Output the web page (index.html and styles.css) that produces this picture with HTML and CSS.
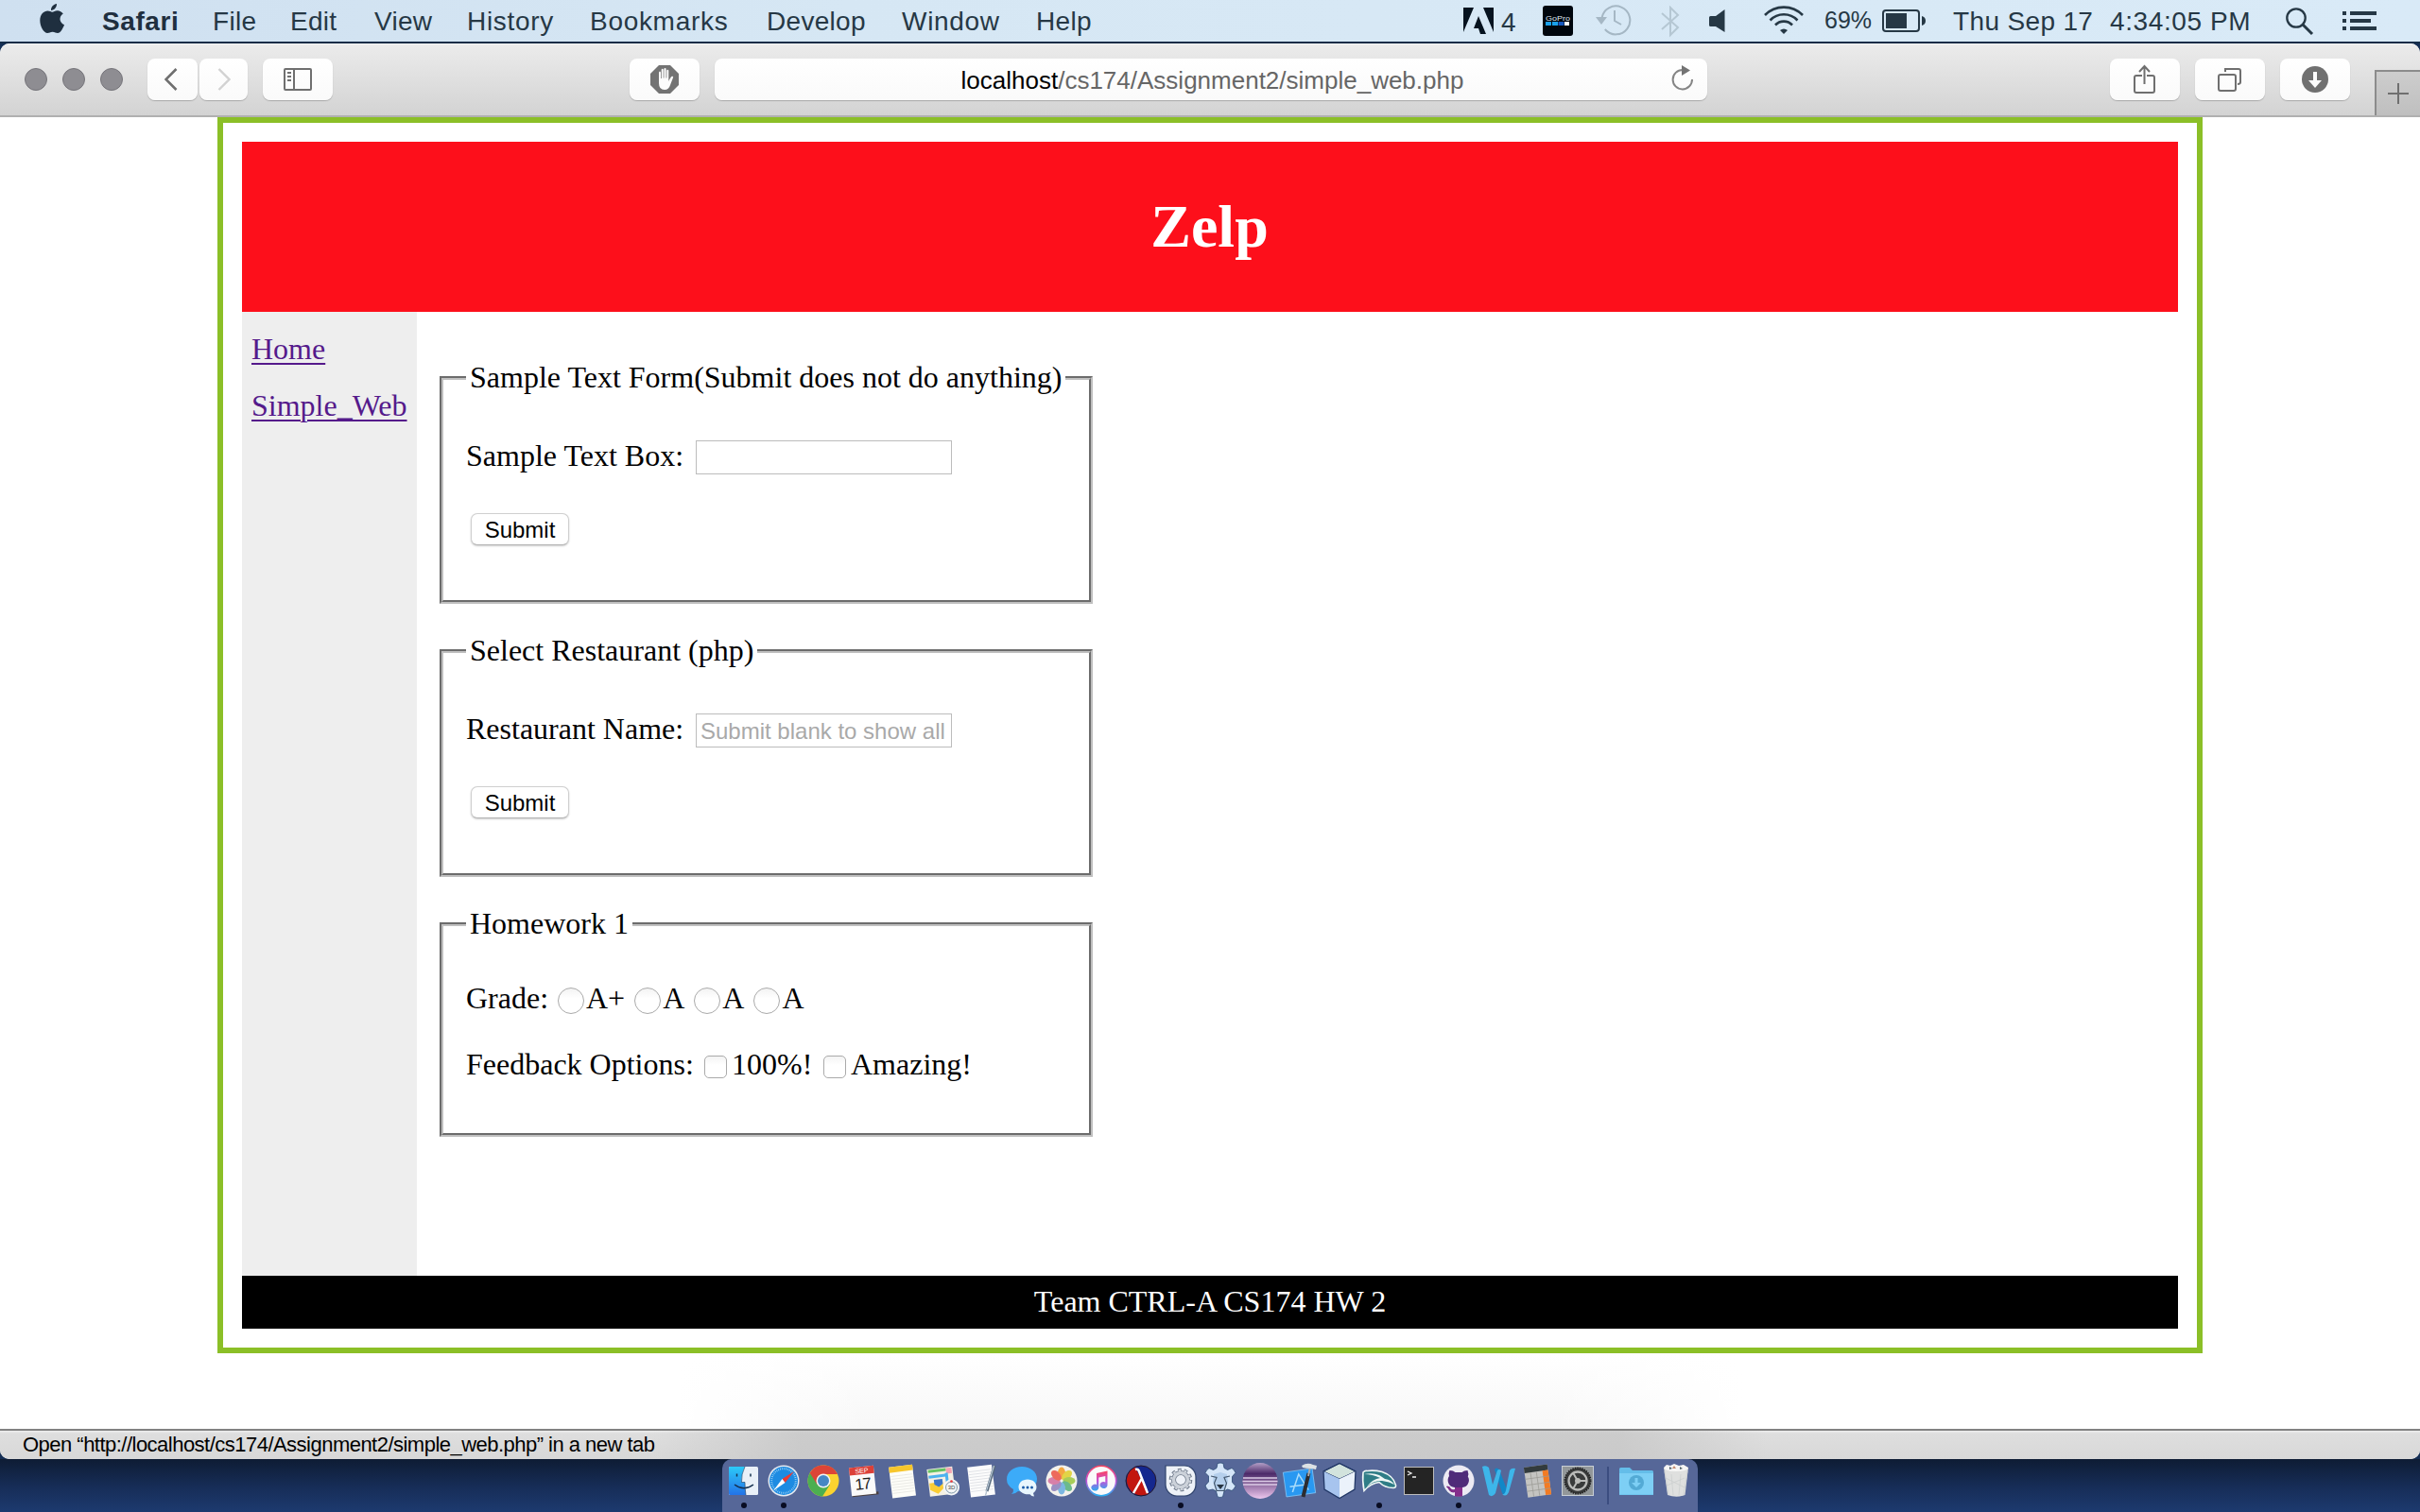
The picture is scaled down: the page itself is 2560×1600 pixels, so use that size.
FILE: index.html
```html
<!DOCTYPE html>
<html lang="en">
<head>
<meta charset="utf-8">
<title>Zelp</title>
<link rel="stylesheet" href="styles.css">
</head>
<body>
<header class="menubar">
  <svg class="apple" width="26" height="32" viewBox="0 0 26 32"><path fill="#1f2f3f" d="M18 0c.3 3.700-2.700 7-6 6.900C11.700 3.500 14.800.4 18 0zM13.300 8.700c1.500 0 3-1.500 5.600-1.400 2.200.1 4.500 1.200 5.900 3.300-4.900 3.200-4.200 9.500 1.200 11.600-1.300 3.500-3.900 8.800-7 8.800-2 0-2.900-1.300-5.400-1.300S10.200 31 8.200 31C4.400 31 .3 24 .3 17.800.3 11 4.600 7.500 8.400 7.500c2.200 0 3.600 1.200 4.900 1.200z"/></svg>
  <nav class="menus">
    <b style="width:117px">Safari</b><span style="width:82px">File</span><span style="width:89px">Edit</span><span style="width:98px">View</span><span class="loose" style="width:130px">History</span><span class="loose" style="width:187px">Bookmarks</span><span style="width:143px">Develop</span><span class="loose" style="width:142px">Window</span><span>Help</span>
  </nav>
  <div class="status-items">
    <svg class="adobe" width="32" height="28" viewBox="0 0 32 28"><path fill="#06131f" d="M0 0h11L0 26zM21 0h11v26zM16 9l8 19h-6l-2-6h-5z"/></svg>
    <span class="adobe-n">4</span>
    <svg class="gopro" width="32" height="32" viewBox="0 0 32 32"><rect width="32" height="32" rx="3" fill="#00060d"/><text x="3" y="16" font-size="7" textLength="26" lengthAdjust="spacingAndGlyphs" fill="#dfe7ee" font-family="Liberation Sans">GoPro</text><path fill="#19a0ea" d="M3 17h6v4H3zM10 17h6v4h-6z"/><path fill="#1557bd" d="M16.500 17h6v4h-6z"/><path fill="#fff" d="M23 17h5v4h-5z"/></svg>
    <svg class="tm" width="38" height="34" viewBox="0 0 38 34"><g fill="none" stroke="#a5b7c4" stroke-width="2"><path d="M6.500 15a15 15 0 1 1 3.300 12"/><path d="M20 7v11l7 4"/></g><path fill="#a5b7c4" d="M0 14h12l-6 8z"/></svg>
    <svg class="bt" width="20" height="34" viewBox="0 0 20 34"><path fill="none" stroke="#b5c7d3" stroke-width="2" d="M1 8l17 15-8 8V2l8 8L1 25"/></svg>
    <svg class="vol" width="18" height="26" viewBox="0 0 18 26"><path fill="#263845" d="M1.500 7H7l9.500-7v24L7 18H1.500Q0 18 0 16.500v-8Q0 7 1.500 7z"/></svg>
    <svg class="wifi" width="42" height="30" viewBox="0 0 42 30"><g fill="none" stroke="#263845" stroke-width="2.600"><path d="M1 10a28 28 0 0 1 40 0M6.500 15.500a20 20 0 0 1 29 0M12 20.500a12.500 12.500 0 0 1 18 0"/></g><path fill="#263845" d="M17 26q4-3 8 0l-4 4z"/></svg>
    <span class="pct">69%</span>
    <svg class="bat" width="46" height="24" viewBox="0 0 46 24"><rect x="1" y="1" width="38" height="22" rx="3" fill="none" stroke="#263845" stroke-width="2"/><path fill="#263845" d="M4 4h22v16H4zM42 7q4 1 4 5t-4 5z"/></svg>
    <span class="date">Thu Sep 17</span><span class="clock">4:34:05 PM</span>
    <svg class="find" width="30" height="30" viewBox="0 0 30 30"><g fill="none" stroke="#263845"><circle cx="11" cy="11" r="9.700" stroke-width="2.300"/><path d="M18 18l10 10" stroke-width="3"/></g></svg>
    <svg class="list" width="36" height="20" viewBox="0 0 36 20"><path fill="#263845" d="M0 0h4v4H0zM8 0h28v4H8zM0 8h4v4H0zM8 8h22v4H8zM0 16h4v4H0zM8 16h28v4H8z"/></svg>
  </div>
</header>

<main class="window">
  <div class="toolbar">
    <div class="lights"><i></i><i></i><i></i></div>
    <div class="btn back"><svg width="14" height="24" viewBox="0 0 14 24"><path fill="none" stroke="#6f6f6f" stroke-width="2.600" d="M12.500 1L1.500 12l11 11"/></svg></div>
    <div class="btn fwd"><svg width="14" height="24" viewBox="0 0 14 24"><path fill="none" stroke="#d2d2d2" stroke-width="2.400" d="M1.500 1l11 11-11 11"/></svg></div>
    <div class="btn side"><svg width="30" height="24" viewBox="0 0 30 24"><path fill="none" stroke="#6f6f6f" stroke-width="2" d="M2 1h26q1 0 1 1v20q0 1-1 1H2q-1 0-1-1V2q0-1 1-1zM11 1v22M4 5h4M4 9h4M4 13h4"/></svg></div>
    <div class="btn block"><svg width="30" height="30" viewBox="0 0 30 30"><path fill="#737373" d="M9 0h12l9 9v12l-9 9H9l-9-9V9z"/><path fill="#fcfcfc" d="M9 8q0-1.500 1-1.500T11 8v6h.7V5q0-1.300 1-1.300t1 1.300v8.500h.700V4.200q0-1.300 1.100-1.300t1.100 1.300v9.300h.7V6q0-1.300 1-1.300t1 1.300v11q2-4.500 3.500-5.200 1.700-.3 1.300 1.200L21 21q-1.500 5-6 5-6 0-6-7z"/></svg></div>
    <div class="address"><span class="host">localhost</span><span class="path">/cs174/Assignment2/simple_web.php</span>
      <svg class="reload" width="24" height="28" viewBox="0 0 24 28"><path fill="none" stroke="#858585" stroke-width="2" d="M12 5A10.200 10.200 0 1 0 22 15"/><path fill="#737373" d="M11 0l9 5.500-9 5.500z"/></svg></div>
    <div class="btn share"><svg width="24" height="32" viewBox="0 0 24 32"><path fill="none" stroke="#6f6f6f" stroke-width="2" d="M9 12H3q-2 0-2 2v14q0 2 2 2h17q2 0 2-2V14q0-2-2-2h-6M11.500 21V2M6 8l5.500-6L17 8"/></svg></div>
    <div class="btn tabs"><svg width="26" height="26" viewBox="0 0 26 26"><path fill="none" stroke="#6f6f6f" stroke-width="2" d="M3 8h14q2 0 2 2v13q0 2-2 2H3q-2 0-2-2V10q0-2 2-2zM8 5V2h14q2 0 2 2v12q0 2-3 2"/></svg></div>
    <div class="btn down"><svg width="28" height="28" viewBox="0 0 28 28"><circle cx="14" cy="14" r="14" fill="#707070"/><path fill="#fcfcfc" d="M12 6h4v9h5l-7 8-7-8h5z"/></svg></div>
    <div class="newtab"><svg width="22" height="22" viewBox="0 0 22 22"><path stroke="#6f6f6f" stroke-width="2" d="M0 11h22M11 0v22"/></svg></div>
  </div>

  <div class="viewport">
    <div class="page">
      <h1 class="banner">Zelp</h1>
      <div class="columns">
        <nav class="sidebar"><a href="#">Home</a><a href="#">Simple_Web</a></nav>
        <section class="content">
          <fieldset class="box">
            <legend>Sample Text Form(Submit does not do anything)</legend>
            <div class="field"><label>Sample Text Box:</label><input class="text" type="text"></div>
            <button class="submit" type="button">Submit</button>
          </fieldset>
          <fieldset class="box">
            <legend>Select Restaurant (php)</legend>
            <div class="field"><label>Restaurant Name:</label><input class="text" type="text" placeholder="Submit blank to show all"></div>
            <button class="submit" type="button">Submit</button>
          </fieldset>
          <fieldset class="box short">
            <legend>Homework 1</legend>
            <div class="options"><span class="lead grade">Grade:</span><input class="radio" type="radio"><span class="opt">A+</span><input class="radio" type="radio"><span class="opt">A</span><input class="radio" type="radio"><span class="opt">A</span><input class="radio" type="radio"><span class="opt">A</span></div>
            <div class="options feedback"><span class="lead fb">Feedback Options:</span><input class="check" type="checkbox"><span class="opt hundred">100%!</span><input class="check" type="checkbox"><span class="opt">Amazing!</span></div>
          </fieldset>
        </section>
      </div>
      <footer class="footer">Team CTRL-A CS174 HW 2</footer>
    </div>
  </div>
  <div class="statusbar">Open “http://localhost/cs174/Assignment2/simple_web.php” in a new tab</div>
</main>

<div class="desktop">
  <div class="dock">
    <div class="app on"><svg viewBox="0 0 42 40"><rect x="5" y="5" width="31" height="30" rx="1.500" fill="#e9f0f8"/><path fill="url(#fb)" d="M6.500 5H22q-4 8-3.500 16.500H22q0 7 1 13.500H6.500Q5 35 5 33.500v-27Q5 5 6.500 5z"/><path fill="none" stroke="#14304f" stroke-width="1.500" d="M13.500 12.500v3M28 12.500v3M11 24q10 7.500 20 0"/><path fill="none" stroke="#1b3b5c" stroke-width=".6" d="M22 5q-4 8-3.500 16.500H22q0 7 1 13.500"/><defs><linearGradient id="fb" x2="0" y2="1"><stop stop-color="#2ccaf8"/><stop offset="1" stop-color="#2373e8"/></linearGradient></defs></svg></div>
    <div class="app on"><svg viewBox="0 0 42 40"><circle cx="21" cy="20" r="16.500" fill="#e6eaf0"/><circle cx="21" cy="20" r="15" fill="#1d8be2"/><circle cx="21" cy="20" r="12.800" fill="none" stroke="#9bd0f3" stroke-width="2" stroke-dasharray=".8 1.200"/><path fill="#f0392f" d="M32 10L19.500 18l3 4z"/><path fill="#fff" d="M10 30.500L19.500 18l3 4z"/></svg></div>
    <div class="app"><svg viewBox="0 0 42 40"><circle cx="21" cy="20" r="16.500" fill="#fbd32f"/><path fill="#4caf50" d="M21 20L6.700 11.700A16.500 16.500 0 0 0 20 36.500l8-12.500z"/><path fill="#dc4437" d="M6.700 11.700A16.500 16.500 0 0 1 36 13H21l-6.500 11z"/><circle cx="21" cy="20" r="7.500" fill="#f4f4f4"/><circle cx="21" cy="20" r="6" fill="#4587c4"/></svg></div>
    <div class="app"><svg viewBox="0 0 42 40"><g transform="rotate(-6 21 20)"><path fill="#4c4140" d="M8 33h28v3H8z"/><rect x="7.500" y="5" width="26" height="30" fill="#fafafa"/><path fill="#dc4038" d="M7.500 5h26v8h-26z"/><text x="20.500" y="11.600" font-size="7" text-anchor="middle" fill="#fff" font-family="Liberation Sans">SEP</text><text x="20" y="29" font-size="17" text-anchor="middle" fill="#222" font-family="Liberation Sans" letter-spacing="-1.500">17</text></g></svg></div>
    <div class="app"><svg viewBox="0 0 42 40"><g transform="rotate(-7 21 20)"><rect x="8" y="4" width="25" height="33" fill="#fdfdf8"/><path fill="#f7c62c" d="M8 4h25v6H8z"/><path stroke="#dfdfda" stroke-width=".6" d="M9 14h23M9 17h23M9 20h23M9 23h23M9 26h23M9 29h23M9 32h23"/></g></svg></div>
    <div class="app"><svg viewBox="0 0 42 40"><g transform="rotate(-7 21 20)"><rect x="6" y="6" width="27" height="29" fill="#f5f1e4"/><path fill="#66c463" d="M7 7h19v3H7z"/><path fill="#f5a2b2" d="M26 7h6v6h-6z"/><path fill="#4db2ef" d="M7 13h20v3H7z"/><path fill="none" stroke="#4db2ef" stroke-width="3" d="M26 12v12"/><path fill="#f9cc33" d="M7 21h14v7l-6 5-8-5z"/><path fill="#3e76c7" d="M12 18h9v5l-4.500 3-4.500-3z"/></g><circle cx="30.500" cy="27" r="8.500" fill="#f3f5f6"/><circle cx="30.500" cy="27" r="6" fill="none" stroke="#8098a8"/><text x="30.500" y="29.200" font-size="6" text-anchor="middle" fill="#444" font-family="Liberation Sans">3D</text><circle cx="30.500" cy="20.500" r="1.300" fill="#e33"/></svg></div>
    <div class="app"><svg viewBox="0 0 42 40"><g transform="rotate(-7 21 20)"><rect x="7" y="4" width="26" height="32" fill="#fcfcfc"/><path stroke="#d0d4da" stroke-width=".6" d="M8 9h24M8 12h24M8 15h24M8 18h24M8 21h24M8 24h24M8 27h24M8 30h24"/></g><path stroke="#56697d" stroke-width="3" d="M34 4l-8 27"/><path stroke="#b7c6d4" stroke-width="1.200" d="M33.500 4l-8 27-1 5"/></svg></div>
    <div class="app"><svg viewBox="0 0 42 40"><path fill="#3cabf8" d="M21 5c9 0 16 5.500 16 13s-7 13.500-16 13.500l-4-.4q-3 3-7 3 2.500-2.500 2-5.100Q5 25 5 18.500C5 10.500 12 5 21 5z"/><path fill="#e9f6fd" d="M27 18.500c5.500 0 9.500 3.600 9.500 8 0 3-1.500 5-3.500 6.500l1 3.500q-3 0-4.500-2.300c-6.500.8-12-2.700-12-7.700 0-4.400 4-8 9.500-8z"/><g fill="#1c5ca8"><circle cx="22.500" cy="27" r="1.500"/><circle cx="27" cy="27" r="1.500"/><circle cx="31.500" cy="27" r="1.500"/></g></svg></div>
    <div class="app"><svg viewBox="0 0 42 40"><circle cx="21" cy="20" r="16.500" fill="#f3f1ec"/><g opacity=".85"><ellipse cx="21" cy="12" rx="4" ry="6.500" fill="#f59b23"/><ellipse cx="21" cy="12" rx="4" ry="6.500" fill="#e0cf2a" transform="rotate(45 21 20)"/><ellipse cx="21" cy="12" rx="4" ry="6.500" fill="#9cc740" transform="rotate(90 21 20)"/><ellipse cx="21" cy="12" rx="4" ry="6.500" fill="#54b17d" transform="rotate(135 21 20)"/><ellipse cx="21" cy="12" rx="4" ry="6.500" fill="#68aee0" transform="rotate(180 21 20)"/><ellipse cx="21" cy="12" rx="4" ry="6.500" fill="#8c80bd" transform="rotate(225 21 20)"/><ellipse cx="21" cy="12" rx="4" ry="6.500" fill="#d36d9e" transform="rotate(270 21 20)"/><ellipse cx="21" cy="12" rx="4" ry="6.500" fill="#ec5344" transform="rotate(315 21 20)"/></g></svg></div>
    <div class="app"><svg viewBox="0 0 42 40"><defs><linearGradient id="it" x2="0" y2="1"><stop stop-color="#fb4360"/><stop offset=".5" stop-color="#c552d8"/><stop offset="1" stop-color="#28aef2"/></linearGradient></defs><circle cx="21" cy="20" r="15.700" fill="#fafafa" stroke="url(#it)" stroke-width="1.600"/><path fill="url(#it)" d="M16 12l11.500-2.500v15a4 3.500 0 1 1-2.200-3.100V15l-7 1.500v10.500a4 3.500 0 1 1-2.300-3.100z"/></svg></div>
    <div class="app"><svg viewBox="0 0 42 40"><circle cx="21" cy="20" r="16" fill="#14278e"/><path fill="#c2160f" d="M15 5.200A16 16 0 1 0 29 34L17 10z"/><circle cx="21" cy="20" r="16" fill="none" stroke="#25172b"/><path fill="none" stroke="#fff" stroke-width="2.500" d="M15 8q3-1 4 2l9 23M21.500 18L13 33"/></svg></div>
    <div class="app on"><svg viewBox="0 0 42 40"><path fill="#eef2f8" stroke="#31456e" stroke-width="1.200" d="M5 4h20a12 12 0 0 1 12 12v8a12 12 0 0 1-12 12h-8A12 12 0 0 1 5 24z"/><circle cx="21" cy="19" r="10.500" fill="none" stroke="#6c7788" stroke-width="3.500" stroke-dasharray="3.600 3"/><circle cx="21" cy="19" r="7.500" fill="none" stroke="#6c7788" stroke-width="5"/><circle cx="21" cy="19" r="10" fill="none" stroke="#ccd2da" stroke-width="2.500" stroke-dasharray="2.500 3.780" stroke-dashoffset="-.5"/><circle cx="21" cy="19" r="7.500" fill="none" stroke="#ccd2da" stroke-width="3.500"/></svg></div>
    <div class="app"><svg viewBox="0 0 42 40"><g fill="#d4e5f8" stroke="#2b4a73" stroke-width=".8"><path d="M18 1.500q3-1 6 0l1 5q2 1 3.500 2l4.500-2q3 2 4 5l-3.500 4v6l3.500 4q-1 3-4 5l-4.500-1.500-3.500 2-1.500 6q-3 1-5.500 0l-1.500-6-3.500-2L8.500 30q-3-2-3.500-5l3.500-4v-6L5 11.500q1-3 4-5l4.500 2q2-1 3.500-2z"/></g><path fill="#b5cfec" d="M14 13l7-2 7 2 1 8-4 9h-8l-4-9z"/><path fill="none" stroke="#44586f" stroke-width="1.200" d="M11 15l6 1.500-2.500 6 2.500 8h8l2.500-8-2.500-6 6-1.500"/><path fill="#273442" d="M17 24h8l-4 5z"/></svg></div>
    <div class="app"><svg viewBox="0 0 42 40"><defs><linearGradient id="ec" x2="0" y2="1"><stop stop-color="#b39fc7"/><stop offset=".3" stop-color="#4c2a69"/><stop offset="1" stop-color="#edc7ee"/></linearGradient></defs><ellipse cx="21" cy="20" rx="18.500" ry="19" fill="url(#ec)"/><path stroke="#dccbe6" stroke-width="1.600" d="M3 17h36M2.500 20.500h37M3 24h36"/></svg></div>
    <div class="app"><svg viewBox="0 0 42 40"><g transform="rotate(-8 20 22)"><rect x="5" y="9" width="31" height="26" fill="#2998f1" stroke="#8dcdf9" stroke-width=".7"/><path fill="none" stroke="#a9dcfb" stroke-width="1.500" d="M12 31l9-18 8 18M10 25h19"/></g><path stroke="#2c2c30" stroke-width="4" d="M30.500 12l-6 25"/><path stroke="#aaa" stroke-width="2" d="M32 5l-2 10"/><path fill="#dce1e4" d="M23 4q6-4 12-1l4 1-1 4-5-1q-5 0-9-1z"/></svg></div>
    <div class="app"><svg viewBox="0 0 42 40"><path fill="#d2e3dd" stroke="#223867" d="M21 1.500L38 10 21 18 4 10z"/><path fill="#a7c4ee" d="M4 10l17 8v20.500L5 29z"/><path fill="#ebf2fb" d="M38 10l-17 8v20.500L37 29z"/><path fill="none" stroke="#223867" stroke-width="1.300" d="M21 1.500L38 10l-1 19-16 9.500L5 29 4 10z"/></svg></div>
    <div class="app on"><svg viewBox="0 0 42 40"><path fill="#2f7d86" stroke="#eff7f5" stroke-width="1.600" d="M4 11q2-2 4-1.500 8-1 16 1 12 4 14.500 14 .5 3-2.500 3-9 0-15-6-9 1-16 9Q3 20 4 11z"/><path fill="#eff7f5" d="M5 13q9-2 16 1l6 4q7 1 10 6-5-3-13-4-8-1-16 6 6-8 14-9-8-4-17-4z"/></svg></div>
    <div class="app"><svg viewBox="0 0 42 40"><rect x="5.500" y="5.500" width="31" height="29" fill="#242424" stroke="#bcbcbc"/><path fill="none" stroke="#eee" stroke-width="1.300" d="M9 10l4 2-4 2M14 16h4"/></svg></div>
    <div class="app on"><svg viewBox="0 0 42 40"><circle cx="21" cy="20" r="16.500" fill="#eceaf3"/><path fill="#4f2b79" d="M11.500 9q4 0 6 2h7q2-2 6-2 1.500 4 .3 6.500Q33 19 31 23q-1.500 3.500-6 4v9.300q-4 .6-8 0V32q-5 1-7-4l-2-2q3-1 4.500 2 2 2.500 4.500 1v-2q-5-.5-6.500-4-2-4.500.5-8Q10 12 11.500 9z"/><path fill="#842e8b" d="M17 27h8v9.300q-4 .6-8 0V32q-5 1-7-4l-2-2q3-1 4.500 2 2 2.500 4.500 1z"/></svg></div>
    <div class="app"><svg viewBox="0 0 42 40"><path fill="#1187c7" d="M17 8q2-3 5 0l9 24q-3 5-6 1z"/><path fill="#3db6ea" d="M4 5q4-2 7 1l4 18 5-15q1.500-2 4 0l-6 24q-3 5-7 2zM25 34q3 1 4-4l4-21q2-3 6-2l-7 25q-3 6-7 2z"/></svg></div>
    <div class="app"><svg viewBox="0 0 42 40"><g transform="rotate(-8 21 20)"><rect x="8" y="4" width="25" height="32" fill="#c4c4c1"/><path fill="#333b3d" d="M8 4h25v6H8z"/><path fill="#f27b24" d="M27 10h6v26h-6z"/><path fill="none" stroke="#999994" stroke-width=".7" d="M8 16.500h25M8 23h25M8 29.500h25M14.300 10v26M20.600 10v26"/></g></svg></div>
    <div class="app"><svg viewBox="0 0 42 40"><rect x="4.500" y="4.500" width="33" height="31" fill="#929799" stroke="#c8cfd5"/><circle cx="21" cy="20" r="13.500" fill="#393b3b"/><circle cx="21" cy="20" r="13.500" fill="none" stroke="#242424" stroke-width="2" stroke-dasharray="1.500 1"/><circle cx="21" cy="20" r="9.500" fill="none" stroke="#babbb9" stroke-width="2.300"/><path stroke="#babbb9" stroke-width="2" d="M21 20H31M21 20l-5-8.500M21 20l-5 8.500"/><circle cx="21" cy="20" r="3" fill="#babbb9"/></svg></div>
    <i class="sep"></i>
    <div class="app"><svg viewBox="0 0 42 40"><path fill="#64bde9" d="M3 7.500Q3 6 4.500 6H14l3 3h20.500Q39 9 39 10.500V35H3z"/><path fill="#7dcff5" d="M3 12h36v22.500H3z"/><circle cx="21" cy="22" r="8" fill="#53aad5"/><path fill="#7dcff5" d="M19.500 17h3v5h3.500l-5 5-5-5h3.500z"/></svg></div>
    <div class="app"><svg viewBox="0 0 42 40"><path fill="#dfe0df" d="M8 6h26l-3.500 29q-9 3.500-18.500 0z"/><path fill="#f6f6f5" d="M8 6l3-3 4 1 4-2 5 2 5-1 5 3q-1 4-13 4T8 6z"/><path fill="#52646b" d="M14 5l3 2-3 1zM25 5l3 2-3 1z"/><path fill="#c58b70" d="M19 4l2 3h-4z"/><path fill="none" stroke="#cccfcf" stroke-width=".8" d="M9 10l4 25M16 13l2 22M26 13l-2 22M33 10l-4 25M10 17l20 10M11 25l19-8"/></svg></div>
  </div>
</div>
</body>
</html>
```
FILE: styles.css
```css
* { box-sizing: border-box; }
body { margin: 0; width: 2560px; height: 1600px; overflow: hidden; display: flex; flex-direction: column; background: #152f55; font-family: "Liberation Sans", Arial, sans-serif; color: #000; }
svg { display: block; flex: none; }

/* Menu bar */
.menubar { height: 46px; flex: none; display: flex; align-items: flex-start; padding: 0 46px 0 42px; background: linear-gradient(90deg, #cfe0f0, #d6e7f4 35%, #d9eaf7); border-bottom: 2px solid #142c47; color: #263845; font-size: 28px; line-height: 45px; white-space: nowrap; }
.apple { margin: 4px 40px 0 0; }
.menus { display: flex; letter-spacing: .3px; }
.menus .loose { letter-spacing: .7px; }
.menus span, .menus b { flex: none; }
.menus b { color: #1f2f3f; letter-spacing: .6px; }
.status-items { display: flex; margin-left: auto; }
.adobe { margin: 8px 8px 0 0; }
.adobe-n { width: 44px; line-height: 48px; }
.gopro { margin: 6px 24px 0 0; }
.tm { margin: 4px 31px 0 0; }
.bt { margin: 6px 31px 0 0; }
.vol { margin: 10px 40px 0 0; }
.wifi { margin: 6px 22px 0 0; }
.pct { width: 61px; font-size: 25px; line-height: 43px; }
.bat { margin: 10px 29px 0 0; }
.date { width: 166px; letter-spacing: .35px; }
.clock { width: 186px; letter-spacing: .6px; }
.find { margin: 8px 30px 0 0; }
.list { margin-top: 12px; }

/* Browser window */
.window { height: 1498px; flex: none; display: flex; flex-direction: column; background: #fff; border-radius: 10px; overflow: hidden; }
.toolbar { height: 78px; flex: none; display: flex; align-items: flex-start; padding: 16px 0 0 26px; background: linear-gradient(#f4f4f4 0, #ebebeb 2px, #d3d3d3 76px); border-bottom: 2px solid #b0b0b0; }
.lights { display: flex; gap: 16px; margin: 10px 26px 0 0; }
.lights i { width: 24px; height: 24px; border-radius: 50%; background: #8e8d92; border: 1px solid #75747a; }
.btn, .address { height: 44px; flex: none; display: flex; align-items: center; justify-content: center; border-radius: 8px; background: linear-gradient(#fff, #fafafa); box-shadow: 0 1px 1px #a9a9a9; }
.back { width: 53px; margin-right: 2px; padding-right: 3px; }
.fwd { width: 51px; margin-right: 16px; }
.side { width: 74px; margin-right: 314px; }
.block { width: 74px; margin-right: 16px; }
.address { width: 1050px; margin-right: 426px; position: relative; padding: 2px 0 0 3px; font-size: 26px; line-height: 42px; white-space: nowrap; }
.path { color: #666; }
.reload { position: absolute; right: 14px; top: 7px; }
.share, .tabs, .down { width: 74px; margin-right: 16px; }
.down { margin-right: 26px; }
.newtab { width: 48px; height: 48px; margin-top: 12px; border: solid #8c8c8c; border-width: 2px 0 0 2px; background: linear-gradient(#cdcdcd, #bfbfbf); padding: 12px 0 0 12px; }

/* Web page */
.viewport { height: 1388px; flex: none; padding: 0 230px; background: linear-gradient(90deg, #fff 28%, rgba(255,255,255,0) 36%, rgba(255,255,255,0) 64%, #fff 72%), linear-gradient(#fff 1310px, #f7f7f7); font-family: "Liberation Serif", "Times New Roman", serif; font-size: 32px; }
.page { height: 1308px; border: 6px solid #8bbf27; padding: 20px; background: #fff; display: flex; flex-direction: column; }
.banner { height: 180px; flex: none; margin: 0; background: #fd0f1b; color: #fff; font-size: 64px; line-height: 180px; text-align: center; text-indent: -1px; }
.columns { flex: 1; display: flex; }
.sidebar { width: 185px; background: #eee; padding: 21px 10px 0; display: flex; flex-direction: column; gap: 24px; line-height: 36px; }
.sidebar a { color: #551a8b; text-decoration: underline; text-underline-offset: 4px; text-decoration-thickness: 2px; }
.content { padding: 51px 0 0 24px; display: flex; flex-direction: column; gap: 32px; }
.box { width: 691px; height: 258px; margin: 0 0 -1px; padding: 0 24px; border: 4px groove #c0c0c0; line-height: 37px; white-space: nowrap; }
.box.short { height: 244px; }
.box legend { padding: 0 4px; }
.field { display: flex; margin-top: 46px; height: 37px; }
.field label { width: 243px; }
.text { width: 271px; height: 36px; margin: 2px 0 0; padding: 2px 4px 0; border: 1px solid #bcbcbc; font: 24px "Liberation Sans", Arial, sans-serif; background: #fff; }
.text::placeholder { color: #a9a9a9; }
.submit { display: block; width: 104px; height: 34px; margin: 42px 0 0 5px; padding: 1px 0 0; border: 1px solid #cfcfcf; border-bottom-color: #b5b5b5; border-radius: 7px; background: #fff; box-shadow: 0 1px 2px #ccc; color: #000; font: 24px/32px "Liberation Sans", Arial, sans-serif; }
.options { display: flex; margin-top: 42px; height: 37px; }
.feedback { margin-top: 33px; }
.grade { width: 97px; }
.fb { width: 252px; }
.radio, .check { appearance: none; flex: none; border: 1px solid #aaa; background: linear-gradient(#f3f3f3, #fff 40%); }
.radio { width: 28px; height: 28px; margin: 7px 2px 0 0; border-radius: 50%; }
.check { width: 24px; height: 24px; margin: 9px 5px 0 0; border-radius: 5px; }
.radio + .opt { margin-right: 10px; }
.hundred { width: 97px; }
.footer { height: 56px; flex: none; background: #000; color: #fff; text-align: center; line-height: 55px; }
.statusbar { height: 32px; flex: none; padding-left: 24px; border-top: 2px solid #828282; background: linear-gradient(90deg, rgba(196,196,196,0) 27%, rgba(196,196,196,.7) 33%, rgba(196,196,196,.7) 67%, rgba(196,196,196,0) 73%), linear-gradient(#eee 0, #dedede 3px, #d8d8d8); font-size: 22px; line-height: 30px; letter-spacing: -.52px; white-space: nowrap; }

/* Desktop and dock */
.desktop { height: 56px; flex: none; display: flex; justify-content: center; background: linear-gradient(#0e1c34, #172e59 55%, #1d3a6f); }
.dock { width: 1032px; height: 56px; display: flex; padding: 3px 2px 0; border-radius: 10px 10px 0 0; background: #566798; }
.app { width: 42px; flex: none; }
.app svg { width: 42px; height: 40px; }
.app.on::after { content: ""; display: block; width: 6px; height: 6px; margin: 3px auto 0; border-radius: 50%; background: #080c22; }
.sep { width: 2px; height: 40px; margin: 5px 8px 0 10px; background: #3b4d80; }
```
